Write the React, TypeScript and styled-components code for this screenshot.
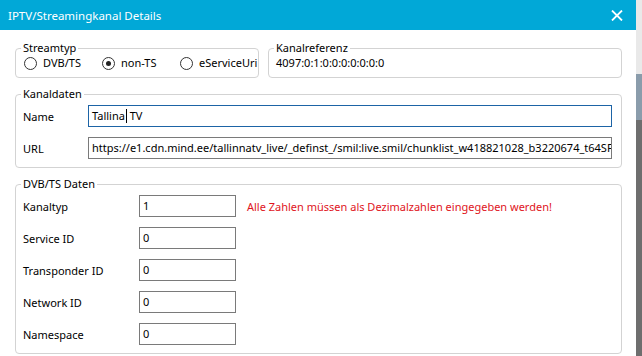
import styled, { createGlobalStyle } from "styled-components";

const GlobalStyle = createGlobalStyle`
  html, body {
    margin: 0;
    padding: 0;
    background: #6b6b6b;
  }
  body {
    font-family: "Noto Sans", "Open Sans", sans-serif;
    font-size: 11px;
    color: #000;
  }
`;

const Screen = styled.div`
  display: flex;
  width: 642px;
  height: 356px;
  overflow: hidden;
`;

const Dialog = styled.div`
  width: 636px;
  height: 356px;
  background: #fff;
  display: flex;
  flex-direction: column;
`;

const Backdrop = styled.div`
  flex: 1;
  background: linear-gradient(
    to bottom,
    #e9e9e9 0,
    #e9e9e9 74px,
    #8a9cab 74px,
    #8a9cab 120px,
    #6e6e6e 120px
  );
`;

const TitleBar = styled.div`
  height: 30px;
  flex-shrink: 0;
  background: #01a8d7;
  display: flex;
  align-items: center;
  justify-content: space-between;
  padding: 0 13px 0 8px;
  color: #fff;
`;

const Title = styled.span`
  font-size: 11.5px;
`;

const Content = styled.div`
  padding: 10px 14px 0 15px;
  display: flex;
  flex-direction: column;
  gap: 8px;
`;

const TopRow = styled.div`
  display: flex;
  gap: 9px;
`;

const Group = styled.fieldset<{ $width?: number }>`
  margin: 0;
  padding: 0 9px 8px 7px;
  border: 1px solid #d3d3d3;
  border-radius: 4px;
  min-width: 0;
  ${({ $width }) => ($width ? `width: ${$width}px; box-sizing: border-box;` : "flex: 1;")}
`;

const Legend = styled.legend`
  padding: 0 2px;
  margin-left: -2px;
  height: 16px;
  line-height: 15px;
  font-size: 11px;
`;

const RadioRow = styled.div`
  display: grid;
  grid-template-columns: 78px 78px 1fr;
  height: 14px;
  line-height: 14px;
  padding-left: 1px;
  margin-bottom: -1px;
`;

const RadioItem = styled.label`
  display: flex;
  align-items: center;
  gap: 6px;
  white-space: nowrap;
`;

const RadioCircle = styled.span<{ $checked?: boolean }>`
  width: 11px;
  height: 11px;
  border: 1px solid #333;
  border-radius: 50%;
  display: flex;
  align-items: center;
  justify-content: center;
  background: #fff;
  flex-shrink: 0;
  &::after {
    content: "";
    width: 5px;
    height: 5px;
    border-radius: 50%;
    background: ${({ $checked }) => ($checked ? "#222" : "transparent")};
  }
`;

const RefText = styled.div`
  line-height: 14px;
  height: 14px;
  margin-bottom: -1px;
`;

const FieldRow = styled.div<{ $labelWidth: number }>`
  display: grid;
  grid-template-columns: ${({ $labelWidth }) => $labelWidth}px auto 1fr;
  align-items: center;
  column-gap: 11px;
  margin-top: 10px;
  &:first-of-type {
    margin-top: 3px;
  }
`;

const FieldLabel = styled.span`
  margin-right: -11px;
`;

const Field = styled.div<{ $focused?: boolean; $width?: number }>`
  box-sizing: border-box;
  height: 22px;
  line-height: 20px;
  border: 1px solid ${({ $focused }) => ($focused ? "#1d64a6" : "#7a7a7a")};
  padding: 0 3px;
  white-space: nowrap;
  overflow: hidden;
  background: #fff;
  ${({ $width }) => ($width ? `width: ${$width}px;` : "")}
`;

const Caret = styled.span`
  display: inline-block;
  width: 1px;
  height: 14px;
  background: #000;
  vertical-align: -3px;
  margin-left: 1px;
`;

const Hint = styled.span`
  color: #e0141c;
  white-space: nowrap;
`;

const CloseIcon = () => (
  <svg width="12" height="11" viewBox="0 0 12 11">
    <path d="M1 0.5 L11 10.5 M11 0.5 L1 10.5" stroke="#fff" strokeWidth="1.8" />
  </svg>
);

const numbers = [
  { label: "Kanaltyp", value: "1" },
  { label: "Service ID", value: "0" },
  { label: "Transponder ID", value: "0" },
  { label: "Network ID", value: "0" },
  { label: "Namespace", value: "0" },
];

export default function App() {
  return (
    <>
      <GlobalStyle />
      <Screen>
        <Dialog>
          <TitleBar>
            <Title>IPTV/Streamingkanal Details</Title>
            <CloseIcon />
          </TitleBar>
          <Content>
            <TopRow>
              <Group $width={244}>
                <Legend>Streamtyp</Legend>
                <RadioRow>
                  <RadioItem>
                    <RadioCircle />
                    DVB/TS
                  </RadioItem>
                  <RadioItem>
                    <RadioCircle $checked />
                    non-TS
                  </RadioItem>
                  <RadioItem>
                    <RadioCircle />
                    eServiceUri
                  </RadioItem>
                </RadioRow>
              </Group>
              <Group>
                <Legend>Kanalreferenz</Legend>
                <RefText>4097:0:1:0:0:0:0:0:0:0</RefText>
              </Group>
            </TopRow>

            <Group>
              <Legend>Kanaldaten</Legend>
              <FieldRow $labelWidth={54}>
                <FieldLabel>Name</FieldLabel>
                <Field $focused style={{ gridColumn: "2 / 4" }}>
                  Tallina
                  <Caret /> TV
                </Field>
              </FieldRow>
              <FieldRow $labelWidth={54}>
                <FieldLabel>URL</FieldLabel>
                <Field style={{ gridColumn: "2 / 4" }}>
                  https://e1.cdn.mind.ee/tallinnatv_live/_definst_/smil:live.smil/chunklist_w418821028_b3220674_t64SFRV.m3u8
                </Field>
              </FieldRow>
            </Group>

            <Group>
              <Legend>DVB/TS Daten</Legend>
              {numbers.map((n, i) => (
                <FieldRow $labelWidth={105} key={n.label}>
                  <FieldLabel>{n.label}</FieldLabel>
                  <Field $width={97}>{n.value}</Field>
                  {i === 0 ? (
                    <Hint>Alle Zahlen müssen als Dezimalzahlen eingegeben werden!</Hint>
                  ) : (
                    <span />
                  )}
                </FieldRow>
              ))}
            </Group>
          </Content>
        </Dialog>
        <Backdrop />
      </Screen>
    </>
  );
}
